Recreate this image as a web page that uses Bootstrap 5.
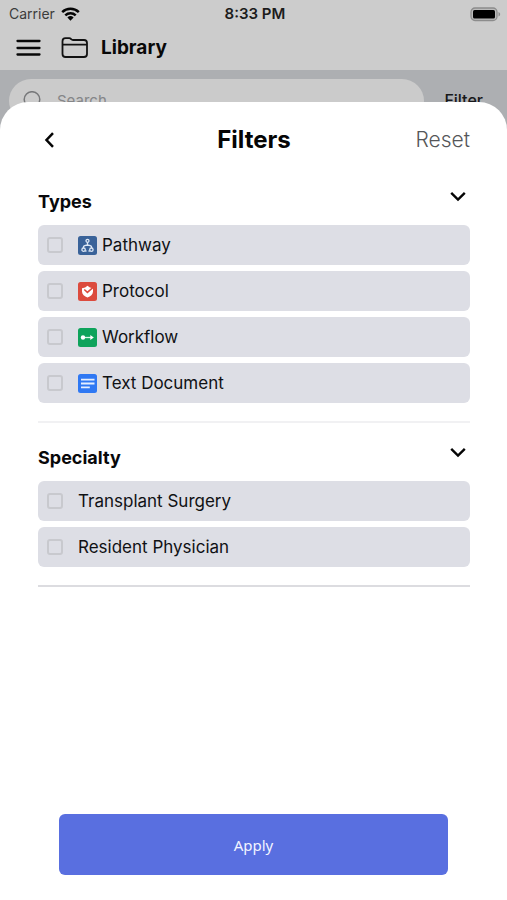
<!DOCTYPE html>
<html lang="en">
<head>
<meta charset="utf-8">
<meta name="viewport" content="width=device-width, initial-scale=1">
<title>Library filters</title>
<link href="https://cdn.jsdelivr.net/npm/bootstrap@5.3.0/dist/css/bootstrap.min.css" rel="stylesheet">
<style>
body { font-family: Inter, "Liberation Sans", sans-serif; color: #101114; background: #fff; }
svg { display: block; flex: none; }
.topbar { background: #ccc; height: 70px; }
.status { height: 28px; padding: 0 6px 0 9px; font-size: 14px; line-height: 28px; }
.status > * { flex: 1 1 0; }
.carrier { color: #3c3c3c; gap: 6px; }
.clock { font-size: 15px; font-weight: 600; color: #1c1c1c; }
.titlebar { height: 40px; padding: 0 16px; gap: 20px; }
.title { font-size: 19px; line-height: 24px; font-weight: 700; color: #080808; margin-left: -8px; }
.searchbar { background: #adafb2; padding: 9px 24px 9px 9px; height: 66px; gap: 20px; }
.searchbox { background: #cbcbcb; border-radius: 22px; height: 44px; padding: 0 14px; gap: 15px; color: #77787a; }
.searchbox input { font-size: 15px; background: none; color: inherit; }
.searchbox input::placeholder { color: #858688; }
.filter-btn { font-size: 16px; font-weight: 500; line-height: 42px; color: #17181a; }
.sheet { background: #fff; border-radius: 28px 28px 0 0; margin-top: -34px; padding: 22px 37px 25px 38px; z-index: 1; }
.sheet-head > * { flex: 1 1 0; }
.sheet-title { font-size: 24px; line-height: 32px; font-weight: 700; color: #050505; }
.reset { font-size: 21px; line-height: 30px; font-weight: 300; color: #555659; }
.group-head { height: 46px; padding: 0 4px 0 0; }
.group-title { font-size: 18px; line-height: 46px; font-weight: 700; color: #08080a; }
.group-toggle { padding: 0 0 12px; }
.types { margin-top: 23px; }
.specialty { margin-top: 12px; }
.options { gap: 6px; }
.option { background: #dddee5; border-radius: 6px; height: 40px; padding: 0 9px; font-size: 17px; line-height: 38px; }
.option .form-check-input { width: 16px; height: 16px; border: 2px solid #c8c9ce; border-radius: 3px; background-color: transparent; margin-right: 15px; }
.option .form-check-input:checked { background-color: #596fe0; border-color: #596fe0; }
.option svg { margin-right: 5px; }
.rule { height: 2px; background: #f1f1f3; margin-top: 18px; }
.rule-strong { background: #dcdce0; }
.apply { background: #596fe0; color: #f2f4ff; border-radius: 6px; height: 61px; margin: 0 22px 0 21px; font: 400 15px/20px "Noto Sans", sans-serif; }
.apply:hover { background: #4a60d2; color: #fff; }
</style>
</head>
<body class="d-flex flex-column min-vh-100">
<header class="topbar">
  <div class="status d-flex align-items-center">
    <div class="carrier d-flex align-items-center">Carrier
      <svg width="19" height="14" viewBox="0 0 19 14" aria-hidden="true"><g fill="none" stroke="#050505" stroke-width="2.5"><path d="M1.2 5.2a12 12 0 0 1 16.600 0M4.300 8.300a7.500 7.500 0 0 1 10.400 0"/></g><path d="M6.400 10.500a4.500 4.500 0 0 1 6.200 0L9.500 13.700z" fill="#050505"/></svg>
    </div>
    <div class="clock text-center">8:33 PM</div>
    <div class="d-flex justify-content-end">
      <svg width="31" height="15" viewBox="0 0 31 15" role="img" aria-label="Battery full"><rect x="1" y="1" width="26" height="12.500" rx="4" fill="#bbb" stroke="#8c8c8c" stroke-width="1.300"/><rect x="3" y="3" width="22" height="8.500" rx="1.500" fill="#000"/><path d="M28.500 5c2.200.8 2.200 3.700 0 4.500z" fill="#8c8c8c"/></svg>
    </div>
  </div>
  <div class="titlebar d-flex align-items-center">
    <button class="btn p-0 border-0" type="button" aria-label="Menu">
      <svg width="25" height="18" viewBox="0 0 25 18"><path d="M1.500 2h22M1.500 9h22M1.500 15.500h22" stroke="#080808" stroke-width="2.300" stroke-linecap="round"/></svg>
    </button>
    <svg width="28" height="22" viewBox="0 0 28 22" aria-hidden="true"><path d="M1.500 17V4.200Q1.500 1.200 4.500 1.200H8.200Q9.200 1.200 10 2L10.800 2.600Q11.300 3 12.300 3H23Q26 3 26 6V17Q26 20 23 20H4.500Q1.500 20 1.500 17ZM1.500 7.700H26" fill="none" stroke="#111" stroke-width="1.800"/></svg>
    <h1 class="title mb-0">Library</h1>
  </div>
</header>
<div class="searchbar d-flex align-items-start">
  <label class="searchbox d-flex align-items-center flex-grow-1">
    <svg width="19" height="20" viewBox="0 0 19 20" aria-hidden="true"><circle cx="9" cy="8.500" r="7.800" fill="none" stroke="#77787a" stroke-width="1.500"/><path d="M14.500 14l4 4.500" stroke="#77787a" stroke-width="1.500"/></svg>
    <input class="border-0 p-0 w-100" type="text" placeholder="Search" aria-label="Search">
  </label>
  <button class="filter-btn btn p-0 border-0" type="button">Filter</button>
</div>
<main class="sheet position-relative d-flex flex-column flex-grow-1">
  <div class="sheet-head d-flex align-items-center">
    <div><button class="btn py-1 px-1 border-0" type="button" aria-label="Back">
      <svg width="16" height="18" viewBox="0 0 16 18"><path d="M11 2.200L4.500 9l6.500 6.800" fill="none" stroke="#050505" stroke-width="2.500"/></svg>
    </button></div>
    <h2 class="sheet-title mb-0 text-center">Filters</h2>
    <div class="text-end"><button class="reset btn p-0 border-0" type="button">Reset</button></div>
  </div>

  <section class="types">
    <div class="group-head d-flex justify-content-between align-items-center">
      <h3 class="group-title mb-0">Types</h3>
      <button class="group-toggle btn border-0" type="button" data-bs-toggle="collapse" data-bs-target="#types" aria-label="Toggle types"><svg width="16" height="11" viewBox="0 0 16 11"><path d="M1.200 1.800L8 8.500l6.800-6.700" fill="none" stroke="#050505" stroke-width="2.400"/></svg></button>
    </div>
    <div class="collapse show" id="types"><div class="options d-flex flex-column">
      <label class="option d-flex align-items-center"><input class="form-check-input mt-0" type="checkbox">
        <svg width="19" height="19" viewBox="0 0 19 19"><rect width="19" height="19" rx="2.500" fill="#396299"/><g fill="none" stroke="#dce7f5" stroke-width="1.300"><circle cx="9.500" cy="4.800" r="1.500"/><path d="M9.500 6.300v2.700M5.400 12v-.8Q5.400 9.500 9.500 9q4.100.5 4.100 2.200v.8"/><circle cx="5.600" cy="13.700" r="1.700"/><circle cx="13.400" cy="13.700" r="1.700"/><path d="M7.200 15h1.300M10.500 15h1.300"/></g></svg>Pathway</label>
      <label class="option d-flex align-items-center"><input class="form-check-input mt-0" type="checkbox">
        <svg width="19" height="19" viewBox="0 0 19 19"><rect width="19" height="19" rx="2.500" fill="#dc4b3e"/><path d="M4 6.200Q7.500 6 9.500 3.800 11.500 6 15 6.200V9.500C15 12.500 12.500 14.500 9.500 15.500 6.500 14.500 4 12.500 4 9.500Z" fill="#fff"/><path d="M6.300 7.500l3.100 2.900 6-5.300" fill="none" stroke="#dc4b3e" stroke-width="1.500"/></svg>Protocol</label>
      <label class="option d-flex align-items-center"><input class="form-check-input mt-0" type="checkbox">
        <svg width="19" height="19" viewBox="0 0 19 19"><rect width="19" height="19" rx="2.500" fill="#0ea35b"/><path d="M5 9.500h9" stroke="#d9f5e5" stroke-width="1.300"/><circle cx="5" cy="9.500" r="2.200" fill="#fff"/><path d="M12.300 7l3.500 2.500-3.500 2.500z" fill="#fff"/></svg>Workflow</label>
      <label class="option d-flex align-items-center"><input class="form-check-input mt-0" type="checkbox">
        <svg width="19" height="19" viewBox="0 0 19 19"><rect width="19" height="19" rx="2.500" fill="#2f78f3"/><path d="M3 5.700h13.500M3 9.500h13.500M3 13.300h8.800" stroke="#e5efff" stroke-width="1.800"/></svg>Text Document</label>
    </div></div>
    <div class="rule"></div>
  </section>

  <section class="specialty">
    <div class="group-head d-flex justify-content-between align-items-center">
      <h3 class="group-title mb-0">Specialty</h3>
      <button class="group-toggle btn border-0" type="button" data-bs-toggle="collapse" data-bs-target="#specialty" aria-label="Toggle specialty"><svg width="16" height="11" viewBox="0 0 16 11"><path d="M1.200 1.800L8 8.500l6.800-6.700" fill="none" stroke="#050505" stroke-width="2.400"/></svg></button>
    </div>
    <div class="collapse show" id="specialty"><div class="options d-flex flex-column">
      <label class="option d-flex align-items-center"><input class="form-check-input mt-0" type="checkbox">Transplant Surgery</label>
      <label class="option d-flex align-items-center"><input class="form-check-input mt-0" type="checkbox">Resident Physician</label>
    </div></div>
    <div class="rule rule-strong"></div>
  </section>

  <button class="apply btn border-0 mt-auto" type="button">Apply</button>
</main>
<script src="https://cdn.jsdelivr.net/npm/bootstrap@5.3.0/dist/js/bootstrap.bundle.min.js"></script>
</body>
</html>
